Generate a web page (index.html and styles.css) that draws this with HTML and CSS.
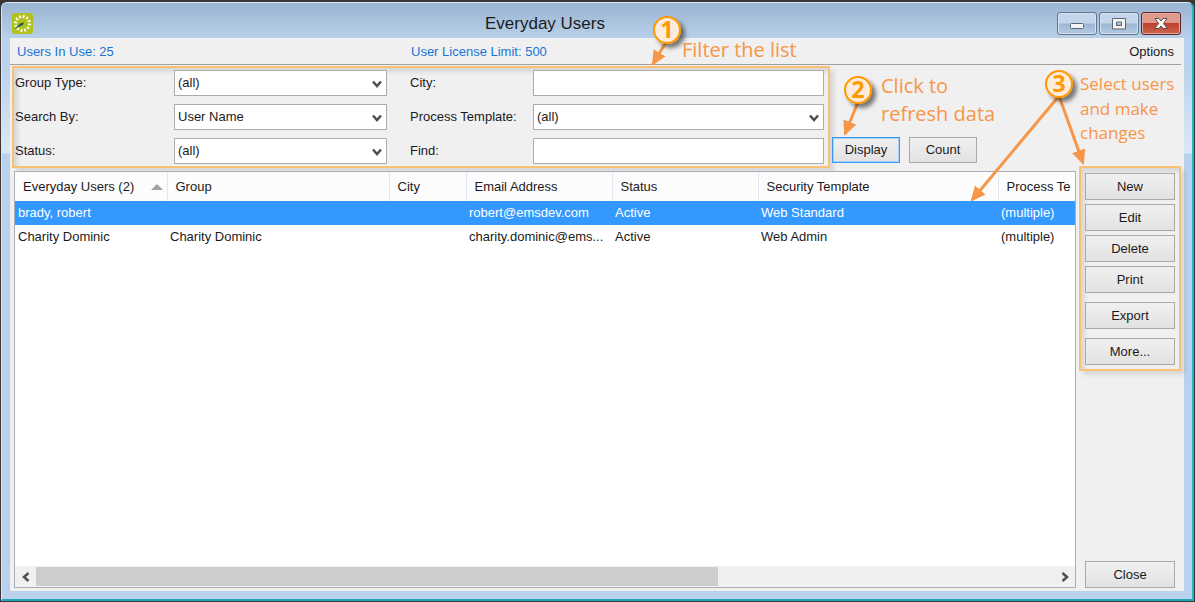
FILE: index.html
```html
<!DOCTYPE html>
<html lang="en">
<head>
<meta charset="utf-8">
<title>Everyday Users</title>
<link rel="stylesheet" href="styles.css">
</head>
<body>
<div class="window">
  <header class="titlebar">
    <svg class="app-icon" viewBox="0 0 21 21" aria-hidden="true">
      <rect width="21" height="21" rx="3" fill="#b0c01c"/>
      <circle cx="10.5" cy="10.5" r="7" fill="none" stroke="#fbfbe4" stroke-width="3" stroke-dasharray="1.9 1.765"/>
      <path d="M2 16L9 10L12 9.500L11 12Z" fill="#1d5a56"/>
    </svg>
    <h1 class="title">Everyday Users</h1>
    <div class="window-controls">
      <button class="control" aria-label="Minimize"><svg viewBox="0 0 20 14"><rect x="3.500" y="6.500" width="13" height="5" rx="1" fill="#f4f4f4" stroke="#5d6570"/></svg></button>
      <button class="control" aria-label="Maximize"><svg viewBox="0 0 20 14"><path fill-rule="evenodd" d="M3.500 1.500h13v10.500h-13zM7.500 5v3.500h5V5z" fill="#f4f4f4" stroke="#5d6570"/></svg></button>
      <button class="control control-close" aria-label="Close window"><svg viewBox="0 0 20 14"><path d="M4 1.500h4l2 2.500 2-2.500h4L12.500 6.500l4 5H12L10 9l-2 2.500H3.500l4-5z" fill="#f6f2f2" stroke="#5c4a50"/></svg></button>
    </div>
  </header>
  <main class="client">
    <div class="infobar">
      <span class="stat stat-use">Users In Use: 25</span>
      <span class="stat">User License Limit: 500</span>
      <button class="options">Options</button>
    </div>
    <div class="workspace">
      <div class="primary">
        <div class="toolbar">
          <form class="filters marked">
            <label for="group-type">Group Type:</label>
            <span class="combo"><select id="group-type"><option>(all)</option></select><svg class="chevron" viewBox="0 0 10 8"><path d="M1 1.500L5 6L9 1.500"/></svg></span>
            <label class="second" for="city">City:</label>
            <input id="city" type="text">
            <label for="search-by">Search By:</label>
            <span class="combo"><select id="search-by"><option>User Name</option></select><svg class="chevron" viewBox="0 0 10 8"><path d="M1 1.500L5 6L9 1.500"/></svg></span>
            <label class="second" for="template">Process Template:</label>
            <span class="combo"><select id="template"><option>(all)</option></select><svg class="chevron" viewBox="0 0 10 8"><path d="M1 1.500L5 6L9 1.500"/></svg></span>
            <label for="status">Status:</label>
            <span class="combo"><select id="status"><option>(all)</option></select><svg class="chevron" viewBox="0 0 10 8"><path d="M1 1.500L5 6L9 1.500"/></svg></span>
            <label class="second" for="find">Find:</label>
            <input id="find" type="text">
          </form>
          <div class="actions">
            <button class="button button-default">Display</button>
            <button class="button">Count</button>
          </div>
        </div>
        <section class="listing">
          <div class="table-area">
            <table class="users">
              <colgroup><col class="c-name"><col class="c-group"><col class="c-city"><col class="c-mail"><col class="c-status"><col class="c-security"><col></colgroup>
              <thead>
                <tr>
                  <th><span class="sorted">Everyday Users (2)<svg class="sort" viewBox="0 0 12 6"><path d="M0 6L6 0L12 6Z"/></svg></span></th>
                  <th>Group</th><th>City</th><th>Email Address</th><th>Status</th><th>Security Template</th><th>Process Te</th>
                </tr>
              </thead>
              <tbody>
                <tr class="selected"><td>brady, robert</td><td></td><td></td><td>robert@emsdev.com</td><td>Active</td><td>Web Standard</td><td>(multiple)</td></tr>
                <tr><td>Charity Dominic</td><td>Charity Dominic</td><td></td><td>charity.dominic@ems...</td><td>Active</td><td>Web Admin</td><td>(multiple)</td></tr>
              </tbody>
            </table>
          </div>
          <div class="scrollbar">
            <button class="scroll-button" aria-label="Scroll left"><svg viewBox="0 0 8 10"><path d="M6.500 1L2 5L6.500 9"/></svg></button>
            <div class="track"><div class="thumb"></div></div>
            <button class="scroll-button" aria-label="Scroll right"><svg viewBox="0 0 8 10"><path d="M1.500 1L6 5L1.500 9"/></svg></button>
          </div>
        </section>
      </div>
      <aside class="side">
        <div class="commands marked">
          <button class="button">New</button>
          <button class="button">Edit</button>
          <button class="button">Delete</button>
          <button class="button">Print</button>
          <button class="button spaced">Export</button>
          <button class="button spaced">More...</button>
        </div>
        <button class="button close">Close</button>
      </aside>
    </div>
  </main>
</div>
<svg class="callouts" width="1195" height="602" viewBox="0 0 1195 602">
  <defs>
    <marker id="head" viewBox="0 0 15 14" refX="13" refY="7" markerWidth="15" markerHeight="14" markerUnits="userSpaceOnUse" orient="auto"><path d="M0 0L15 7L0 14Z" fill="#f79646"/></marker>
    <filter id="shade" x="-50%" y="-50%" width="220%" height="220%"><feDropShadow dx="4" dy="4" stdDeviation="2" flood-color="#000" flood-opacity="0.5"/></filter>
  </defs>
  <g class="arrows">
    <path d="M666 42L653 64"/>
    <path d="M858 102L845 134"/>
    <path d="M1059 96L972 200"/>
    <path d="M1059 96L1083 163"/>
  </g>
  <g class="badges" filter="url(#shade)">
    <circle cx="667" cy="30" r="13"/>
    <circle cx="858" cy="90" r="13"/>
    <circle cx="1059" cy="84" r="13"/>
  </g>
  <g class="numbers">
    <text x="667" y="38">1</text>
    <text x="858" y="98">2</text>
    <text x="1059" y="92">3</text>
  </g>
  <g class="notes">
    <text x="682" y="57">Filter the list</text>
    <text x="881" y="93">Click to</text>
    <text x="881" y="121">refresh data</text>
  </g>
  <g class="notes notes-small">
    <text x="1080" y="90">Select users</text>
    <text x="1080" y="115">and make</text>
    <text x="1080" y="139">changes</text>
  </g>
</svg>
</body>
</html>
```
FILE: styles.css
```css
* { box-sizing: border-box; }

body {
  margin: 0;
  min-height: 100vh;
  display: flex;
  background: #3a3637;
  position: relative;
  overflow: hidden;
  font: 13px/18px "Liberation Sans", Arial, sans-serif;
  color: #1c1a20;
}

button, input, select { font: inherit; color: inherit; margin: 0; }

.window {
  flex: 1;
  display: flex;
  flex-direction: column;
  margin: 2px 1px 1px;
  padding: 0 8px 8px;
  border: 1px solid #dce6f2;
  border-right: 2px solid #25b4d0;
  border-bottom: 2px solid #1fa5b8;
  border-radius: 6px 6px 0 0;
  background: linear-gradient(#99b4d1, #b9d1ea 36px, #b9d1ea 60px, #dce8f5 150px, #b9d1ea 151px);
}

.titlebar { display: flex; align-items: center; height: 35px; padding: 6px 3px 0 2px; }
.app-icon { width: 21px; height: 21px; }
.title { flex: 1; margin: 0; text-align: center; font-size: 17px; line-height: 24px; font-weight: 400; }
.window-controls { display: flex; gap: 2px; }
.control {
  display: grid;
  place-items: center;
  width: 40px;
  height: 23px;
  padding: 0;
  border: 1px solid #64758c;
  border-radius: 3px;
  background: linear-gradient(#c3d5ea 48%, #9cb6d2 52%, #b5cbe4);
  box-shadow: inset 0 0 0 1px #d3e1f1;
}
.control svg { width: 20px; height: 14px; }
.control-close {
  border-color: #5b2428;
  background: linear-gradient(#dd9a8d 45%, #bd3f2b 50%, #cb6550);
  box-shadow: inset 0 0 0 1px #e2aaa0;
}

.client { flex: 1; display: flex; flex-direction: column; background: #f0f0f0; }
.infobar {
  display: flex;
  align-items: center;
  height: 27px;
  margin-right: 3px;
  padding: 2px 7px 0;
  border-bottom: 1px solid #a0a0a0;
}
.stat { color: #1a73d9; }
.stat-use { width: 394px; }
.options { margin-left: auto; padding: 0; border: 0; background: none; }

.workspace { flex: 1; display: flex; gap: 3px; padding: 1px 3px 3px 2px; }
.primary { flex: 1; min-width: 0; display: flex; flex-direction: column; gap: 3px; }
.marked {
  border: 2px solid #fac173;
  box-shadow: 4px 4px 4px rgba(0, 0, 0, .1), inset 4px 4px 4px rgba(0, 0, 0, .1);
}

.toolbar { display: flex; align-items: flex-end; gap: 2px; }
.filters {
  flex: 1;
  display: grid;
  grid-template-columns: 159px 213fr 146px 291fr;
  grid-auto-rows: 26px;
  row-gap: 8px;
  align-items: center;
  padding: 2px 4px 2px 1px;
}
.second { padding-left: 23px; }
.combo { position: relative; display: grid; }
.filters input, .filters select {
  width: 100%;
  height: 26px;
  padding: 0 3px;
  border: 1px solid #abadb3;
  border-radius: 0;
  background: #fff;
  appearance: none;
}
.chevron { position: absolute; right: 5px; top: 10px; width: 10px; height: 8px; pointer-events: none; }
.chevron path, .scroll-button path { fill: none; stroke: #505050; stroke-width: 2.5; }
.actions { display: flex; gap: 9px; width: 244px; padding-bottom: 5px; }
.button {
  height: 27px;
  padding: 0;
  border: 1px solid #a9a9a9;
  background: linear-gradient(#f0f0f0, #e2e2e2);
}
.actions .button { width: 68px; height: 26px; }
.actions .button-default { border-color: #3b97f5; box-shadow: inset 0 0 0 1px #a8d0f8; }

.listing {
  flex: 1;
  display: flex;
  flex-direction: column;
  margin-left: 2px;
  border: 1px solid #abadb8;
  background: #fff;
}
.table-area { flex: 1; overflow: hidden; }
.users { width: 100%; table-layout: fixed; border-collapse: collapse; }
.c-name { width: 152px; }
.c-group { width: 222px; }
.c-city { width: 77px; }
.c-mail, .c-status { width: 146px; }
.c-security { width: 240px; }
th, td { padding: 0 3px; text-align: left; white-space: nowrap; overflow: hidden; font-weight: 400; }
th { height: 29px; padding: 0 0 0 8px; background: #fcfcfc; border-right: 1px solid #dfe9f5; }
th:last-child { border-right: 0; }
td { height: 24px; }
td:last-child { padding-right: 0; }
.selected { background: #3399ff; color: #fff; }
.sorted { display: flex; align-items: center; justify-content: space-between; padding-right: 4px; }
.sort { width: 12px; height: 6px; fill: #a0a0a0; }

.scrollbar { display: flex; height: 21px; background: #f0f0f0; padding: 1px 0; }
.scroll-button { width: 21px; display: grid; place-items: center; padding: 0; border: 0; background: none; }
.scroll-button svg { width: 8px; height: 10px; }
.track { flex: 1; display: flex; }
.thumb { width: 67%; background: #cdcdcd; }

.side { width: 102px; display: flex; flex-direction: column; justify-content: space-between; padding-top: 100px; }
.commands { display: flex; flex-direction: column; gap: 4px; padding: 5px 4px 4px; }
.spaced { margin-top: 5px; }
.close { margin: 0 6px; }

.callouts { position: absolute; left: 0; top: 0; pointer-events: none; font-family: "Open Sans", "Noto Sans", sans-serif; }
.arrows path { fill: none; stroke: #f79646; stroke-width: 3; marker-end: url(#head); }
.badges circle { fill: #fdebdc; stroke: #ff9900; stroke-width: 2; }
.numbers { fill: #ff9900; font-size: 23px; font-weight: 700; text-anchor: middle; }
.notes { fill: #f79646; font-size: 20px; font-weight: 400; }
.notes-small { font-size: 17px; }
```
